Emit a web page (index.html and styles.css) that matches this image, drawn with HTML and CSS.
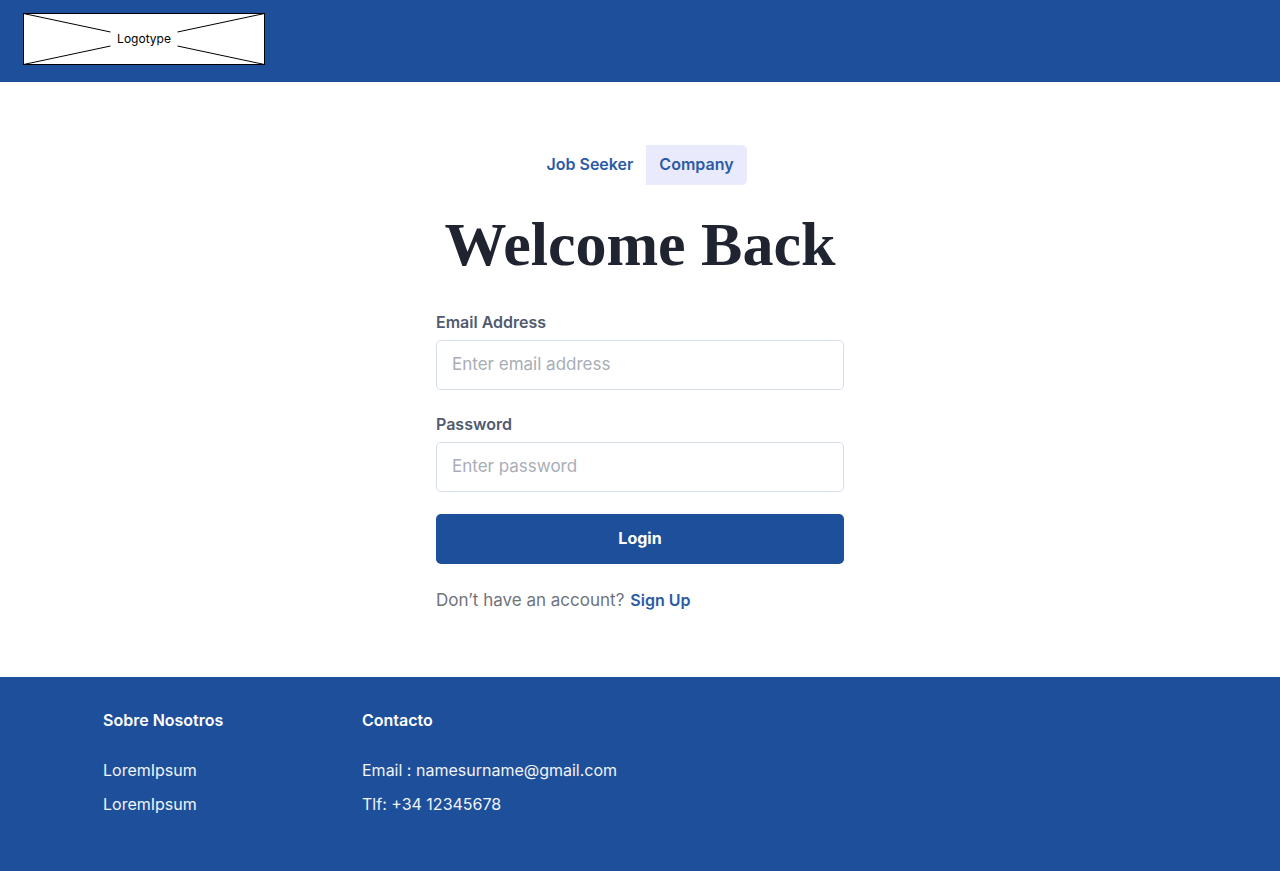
FILE: index.html
```html
<!DOCTYPE html>
<html lang="en">
<head>
  <meta charset="utf-8">
  <meta name="viewport" content="width=device-width, initial-scale=1">
  <title>Login</title>
  <link rel="stylesheet" href="styles.css">
</head>
<body>
  <header class="site-header">
    <a class="logo" href="#">
      <svg class="logo-lines" viewBox="0 0 242 52" fill="none" stroke="#000" aria-hidden="true">
        <path d="M.5 .5L87.500 19M241.500 .5L154.500 19M.5 51.500L87.500 33M241.500 51.500L154.500 33"/>
      </svg>
      <span class="logo-text">Logotype</span>
    </a>
  </header>

  <main class="login">
    <div class="tabs">
      <button class="tab" type="button">Job Seeker</button>
      <button class="tab tab-active" type="button">Company</button>
    </div>
    <h1 class="title">Welcome Back</h1>
    <form class="form">
      <div class="field">
        <label class="label" for="email">Email Address</label>
        <input class="input" id="email" type="email" placeholder="Enter email address">
      </div>
      <div class="field">
        <label class="label" for="password">Password</label>
        <input class="input" id="password" type="password" placeholder="Enter password">
      </div>
      <button class="submit" type="submit">Login</button>
    </form>
    <p class="signup"><span class="signup-text">Don’t have an account?</span><a class="signup-link" href="#">Sign Up</a></p>
  </main>

  <footer class="site-footer">
    <section>
      <h2 class="footer-title">Sobre Nosotros</h2>
      <ul class="footer-list">
        <li><a href="#">LoremIpsum</a></li>
        <li><a href="#">LoremIpsum</a></li>
      </ul>
    </section>
    <section>
      <h2 class="footer-title">Contacto</h2>
      <ul class="footer-list">
        <li>Email : namesurname@gmail.com</li>
        <li>Tlf: +34 12345678</li>
      </ul>
    </section>
  </footer>
</body>
</html>
```

FILE: styles.css
```css
* {
  box-sizing: border-box;
}

body {
  margin: 0;
  min-height: 100vh;
  display: flex;
  flex-direction: column;
  background: #fff;
  font: 16px/24px Inter, "Liberation Sans", sans-serif;
}

button,
input {
  font: inherit;
}

a {
  color: inherit;
  text-decoration: none;
}

.site-header {
  padding: 13px 23px 17px;
  background: #1e4f9b;
}

.logo {
  display: grid;
  place-items: center;
  width: 242px;
  height: 52px;
  background: #fff;
  outline: 1px solid #000;
  outline-offset: -1px;
  color: #000;
  font-size: 12px;
}

.logo-lines,
.logo-text {
  grid-area: 1 / 1;
}

.logo-lines {
  width: 100%;
}

.login {
  flex: 1;
  display: flex;
  flex-direction: column;
  width: 100%;
  max-width: 440px;
  margin: 0 auto;
  padding: 63px 16px 65px;
}

.tabs {
  display: flex;
  justify-content: center;
}

.tab {
  height: 40px;
  padding: 0 13px 3px;
  border: 0;
  border-radius: 5px 0 0 5px;
  background: none;
  color: #2c5ba6;
  font-weight: 600;
}

.tab-active {
  border-radius: 0 5px 5px 0;
  background: #e9ebfd;
}

.title {
  margin: 23px 0 30px;
  color: #202430;
  font: bold 62px/72px "Liberation Serif", serif;
  text-align: center;
}

.form {
  display: flex;
  flex-direction: column;
  gap: 22px;
}

.field {
  display: flex;
  flex-direction: column;
  gap: 6px;
}

.label {
  color: #515b6f;
  font-weight: 600;
}

.input {
  width: 100%;
  height: 50px;
  padding: 0 15px 3px;
  border: 1px solid #d6ddeb;
  border-radius: 5px;
  background: #fff;
  color: #202430;
  font-size: 17px;
}

.input::placeholder {
  color: #a8adb7;
  opacity: 1;
}

.submit {
  height: 50px;
  padding: 0 24px 3px;
  border: 0;
  border-radius: 5px;
  background: #1e4f9b;
  color: #fff;
  font-weight: 700;
}

.signup {
  display: flex;
  gap: 6px;
  margin: 24px 0 0;
  color: #6f737b;
}

.signup-text {
  font-size: 17px;
}

.signup-link {
  color: #2c5ba6;
  font-weight: 600;
}

.site-footer {
  display: grid;
  grid-template-columns: 259px 1fr;
  padding: 31px 103px 55px;
  background: #1e4f9b;
  color: #fff;
}

.footer-title {
  margin: 0 0 26px;
  font-size: 16px;
  font-weight: 600;
}

.footer-list {
  display: grid;
  gap: 10px;
  margin: 0;
  padding: 0;
  list-style: none;
  color: #f1f4f9;
}
```
